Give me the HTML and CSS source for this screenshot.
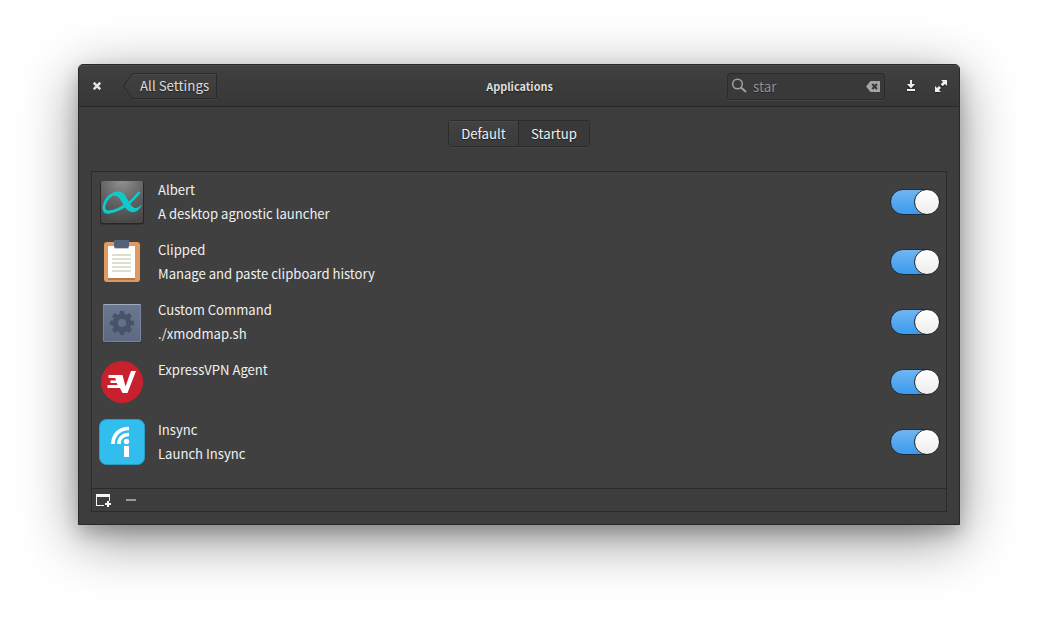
FILE: index.html
```html
<!DOCTYPE html>
<html lang="en">
<head>
<meta charset="utf-8">
<title>Applications</title>
<link rel="stylesheet" href="styles.css">
</head>
<body>
<main class="window">
  <header class="headerbar">
    <svg class="close" width="8" height="8" viewBox="0 0 8 8"><path d="M.7 .7L7.300 7.300M7.300 .7L.7 7.300" stroke="#e2e3e0" stroke-width="2.500"/></svg>
    <div class="back">
      <svg class="back-shape" width="95" height="28" viewBox="0 0 95 28"><defs><linearGradient id="bg" x2="0" y2="1"><stop stop-color="#414141"/><stop offset="1" stop-color="#3a3a3a"/></linearGradient></defs><path d="M10 1.500H93.500V26.500H10L1.500 14Z" fill="none" stroke="#434343"/><path d="M9.500 .5H92.500Q93.500 .5 93.500 1.500V24.500Q93.500 25.500 92.500 25.500H9.500L.5 13Z" fill="url(#bg)" stroke="#2a2a2a"/><path d="M10.500 1.500H92.500" stroke="#484848"/></svg>
      <span class="back-label">All Settings</span>
    </div>
    <h1 class="title">Applications</h1>
    <div class="search">
      <svg class="lens" width="16" height="16" viewBox="0 0 16 16" fill="none" stroke="#a0a0a0"><circle cx="6.500" cy="6" r="4.800" stroke-width="1.500"/><path d="M10 9.500L15 14" stroke-width="2"/></svg>
      <span class="query">star</span>
      <svg width="14" height="11" viewBox="0 0 14 11"><path d="M0 5.500L4.500 0H14V11H4.500Z" fill="#a3a3a3"/><path d="M6.300 3L11 8M11 3L6.300 8" stroke="#363636" stroke-width="2"/></svg>
    </div>
    <svg class="download" width="10" height="12" viewBox="0 0 10 12"><path d="M4 2H6V6H9L5 10L1 6H4ZM1 11H9V12H1Z" fill="#222"/><path d="M4 0H6V4H9L5 8.500L1 4H4ZM1 9H9V11H1Z" fill="#eee"/></svg>
    <svg class="expand" width="12" height="13" viewBox="0 0 12 13"><path d="M6 1H12V7L10.200 5.200L7.800 7.600L5.400 5.200L7.800 2.800ZM0 13V7L1.800 8.800L3.900 6.700L6.300 9.100L4.200 11.200L6 13Z" fill="#222"/><path d="M6 0H12V6L10 4L7.700 6.300L5.700 4.300L8 2ZM0 12V6L2 8L4 6L6 8L4 10L6 12Z" fill="#eee"/></svg>
  </header>
  <section class="content">
    <nav class="tabs"><span class="tab">Default</span><span class="tab active">Startup</span></nav>
    <div class="frame">
      <ul class="list">
        <li class="row">
          <svg class="icon" width="48" height="48" viewBox="0 0 48 48"><defs><radialGradient id="al" cx=".5" cy="0" r="1"><stop stop-color="#909090"/><stop offset=".5" stop-color="#656565"/><stop offset="1" stop-color="#484848"/></radialGradient></defs><rect x="2" y="3.500" width="44" height="43" rx="3" fill="#272727"/><rect x="3" y="3" width="42" height="42" rx="2" fill="url(#al)"/><path d="M41.500 14C36 21 28 29 19 32C12 35 5.500 34.500 6 29C7 21 13 15.500 19 15.500" fill="none" stroke="#10cbcb" stroke-width="2.600"/><path d="M14 15.500C18 12.500 24 13 27 17C30 21 32 28 36.500 30C39 30.500 41 29 44 26.500C41 33 36 36 31 33C24 29 24 17.500 15 17.500Z" fill="#10c9c9"/><path d="M4.700 28C6 35 15 33 22 29L28 24C22 32 13 36.500 8 35.500Q4 34.500 4.700 28Z" fill="#10c9c9"/></svg>
          <div class="text"><span>Albert</span><span>A desktop agnostic launcher</span></div><span class="switch"><i class="knob"></i></span>
        </li>
        <li class="row">
          <svg class="icon" width="48" height="48" viewBox="0 0 48 48"><rect x="6" y="4" width="36" height="40" rx="3" fill="#e09a60"/><rect x="10" y="38" width="27" height="4" fill="#b47946"/><path d="M10 8H37V40H10Z" fill="#fff"/><path d="M16 8H31V10Q31 11 30 11H17Q16 11 16 10Z" fill="#ccc"/><path d="M16 2H31V8Q31 10 29 10H18Q16 10 16 8Z" fill="#53617a"/><path d="M14 17H33M14 21H33M14 25H33M14 29H33M14 33H33" stroke="#dcdecf" stroke-width="2"/></svg>
          <div class="text"><span>Clipped</span><span>Manage and paste clipboard history</span></div><span class="switch"><i class="knob"></i></span>
        </li>
        <li class="row">
          <svg class="icon" width="48" height="48" viewBox="0 0 48 48"><defs><linearGradient id="cc" x2="0" y2="1"><stop stop-color="#6b7891"/><stop offset="1" stop-color="#5c6981"/></linearGradient></defs><rect x="5" y="6" width="38" height="38" rx="1.500" fill="url(#cc)"/><rect x="5.500" y="6.500" width="37" height="37" rx="1" fill="none" stroke="#7786a0"/><path d="M5.500 6.500H42.500" stroke="#a0aabd"/><path d="M4 44.500H44" stroke="#303740"/><circle cx="24" cy="25" r="6.750" fill="none" stroke="#475467" stroke-width="5.500"/><path d="M24 13V17M24 33V37M12 25H16M32 25H36M15.500 16.500L18.300 19.300M29.700 30.700L32.500 33.500M32.500 16.500L29.700 19.300M18.300 30.700L15.500 33.500" stroke="#475467" stroke-width="4.600"/></svg>
          <div class="text"><span>Custom Command</span><span>./xmodmap.sh</span></div><span class="switch"><i class="knob"></i></span>
        </li>
        <li class="row">
          <svg class="icon" width="48" height="48" viewBox="0 0 48 48"><circle cx="24" cy="24" r="21" fill="#c8202c"/><path d="M10.500 17H24.500L27.500 28.500L33 13H38L29.500 35H24.500L22 30H9.500V27H19.500L18.800 25H12.500V22.500H18L17.200 20H10.500Z" fill="#fff"/></svg>
          <div class="text"><span>ExpressVPN Agent</span></div><span class="switch"><i class="knob"></i></span>
        </li>
        <li class="row">
          <svg class="icon" width="48" height="48" viewBox="0 0 48 48"><rect x="1.500" y="1.500" width="45" height="45" rx="7" fill="#32bdef" stroke="#2d9cc4"/><path d="M15 26C15 17 21 10.500 31 10.500M21 26C21 20 25 16.500 31 16.500" fill="none" stroke="#fff" stroke-width="3.700"/><circle cx="28.500" cy="23.500" r="2.700" fill="#fff"/><path d="M26 28H31V39H26Z" fill="#fff"/></svg>
          <div class="text"><span>Insync</span><span>Launch Insync</span></div><span class="switch"><i class="knob"></i></span>
        </li>
      </ul>
      <footer class="toolbar">
        <svg class="add" width="16" height="14" viewBox="0 0 16 14"><path d="M.5 12V.5H13.500V7M.5 11.500H8" fill="none" stroke="#f5f5f5"/><path d="M0 0H14V3H0Z" fill="#f5f5f5"/><path d="M12 7V13M9 10H15" stroke="#f5f5f5" stroke-width="2"/></svg>
        <svg class="remove" width="10" height="2" viewBox="0 0 10 2"><path d="M0 0H10V2H0Z" fill="#9a9a9a"/></svg>
      </footer>
    </div>
  </section>
</main>
</body>
</html>
```

FILE: styles.css
```css
* { box-sizing: border-box; }
body {
  margin: 0;
  padding: 64px 78px 0;
  height: 617px;
  overflow: hidden;
  background: #fff;
  color: #f0f0f0;
  font: 13.33px/24px "Noto Sans CJK SC", "Noto Sans", sans-serif;
}
svg { display: block; flex: none; }
.window {
  width: 882px;
  height: 461px;
  border: 1px solid #292929;
  border-radius: 5px 5px 0 0;
  background: #3d3d3d;
  box-shadow: 0 14px 56px rgba(0, 0, 0, .45), 0 8px 18px rgba(0, 0, 0, .2);
}
.headerbar {
  display: flex;
  align-items: center;
  height: 42px;
  padding: 1px 12px 0 14px;
  border-bottom: 1px solid #292929;
  border-radius: 4px 4px 0 0;
  background: linear-gradient(#404040, #373737);
  box-shadow: inset 0 1px #4d4d4d;
  text-shadow: 0 1px 1px #222;
}
.back { display: grid; width: 95px; height: 26px; margin-left: 22px; }
.back-shape, .back-label { grid-area: 1 / 1; }
.back-label { padding: 1px 0 0 17px; color: #ddd; white-space: nowrap; }
.title { flex: 1; margin: 0; padding: 0 0 1px 94px; text-align: center; font-size: 10.9px; font-weight: 700; color: #ddd; }
.search {
  display: flex;
  align-items: center;
  width: 158px;
  height: 27px;
  margin: 1px 21px 0 0;
  padding: 0 4px 0 3px;
  border: 1px solid #2b2b2b;
  border-radius: 3px;
  background: #393939;
  box-shadow: 0 1px #434343;
}
.lens { margin-bottom: 1px; }
.query { flex: 1; padding: 1px 0 0 6px; color: #929292; }
.expand { margin: 1px 0 0 19px; }
.content { padding: 13px 12px 0; }
.tabs { display: flex; width: 142px; height: 27px; margin: 0 auto; border: 1px solid #2c2c2c; border-radius: 3px; font-size: 13.2px; box-shadow: 0 1px #444; }
.tab { width: 69px; text-align: center; line-height: 25px; background: linear-gradient(#424242, #3b3b3b); box-shadow: inset 0 1px #484848; text-shadow: 0 1px 1px #222; }
.active { width: 71px; border-left: 1px solid #2c2c2c; background: #393939; box-shadow: none; }
.frame { height: 341px; margin-top: 24px; border: 1px solid #2b2b2b; background: #404040; }
.list { height: 316px; margin: 0; padding: 0; list-style: none; }
.row { display: flex; height: 60px; padding: 6px; }
.text { display: flex; flex: 1; flex-direction: column; margin-left: 12px; font-size: 13.1px; }
.switch {
  display: flex;
  justify-content: flex-end;
  width: 50px;
  height: 26px;
  margin-top: 11px;
  border: 1px solid #222c35;
  border-radius: 13px;
  background: linear-gradient(#70b5f2, #3a9bed);
}
.knob { width: 26px; height: 26px; margin: -1px -1px 0 0; border: 1px solid #292929; border-radius: 50%; background: linear-gradient(#fff, #ededed); }
.toolbar { display: flex; align-items: center; height: 23px; padding: 0 4px; border-top: 1px solid #2b2b2b; background: #3d3d3d; }
.add { margin-top: 2px; }
.remove { margin-left: 14px; }
```
